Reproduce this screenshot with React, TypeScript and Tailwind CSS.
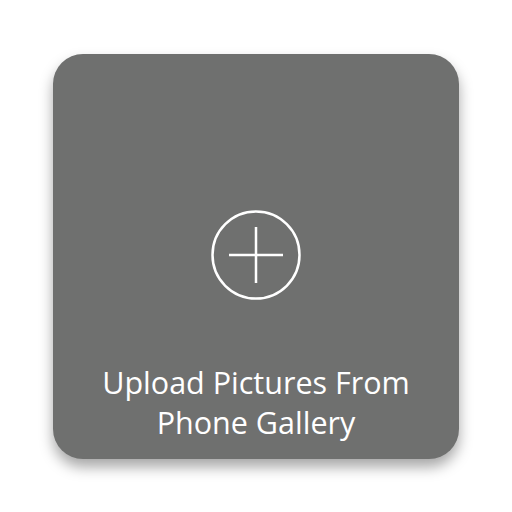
export default function App() {
  return (
    <div className="w-[512px] h-[512px] bg-white flex items-center justify-center">
      <div className="w-[406px] h-[405px] rounded-[30px] bg-[#6f706f] shadow-[0_8px_14px_rgba(0,0,0,0.35)] flex flex-col items-center pt-[156px]">
        {/* plus-in-circle */}
        <svg width="90" height="90" viewBox="0 0 90 90" fill="none" stroke="white">
          <circle cx="45" cy="45" r="43.5" strokeWidth="2.5" />
          <path d="M45 17V73M18 45H72" strokeWidth="2.5" />
        </svg>
        <p className="mt-[62px] text-center text-white text-[30.5px] leading-[40px] font-['Open_Sans',sans-serif]">
          Upload Pictures From
          <br />
          Phone Gallery
        </p>
      </div>
    </div>
  );
}
